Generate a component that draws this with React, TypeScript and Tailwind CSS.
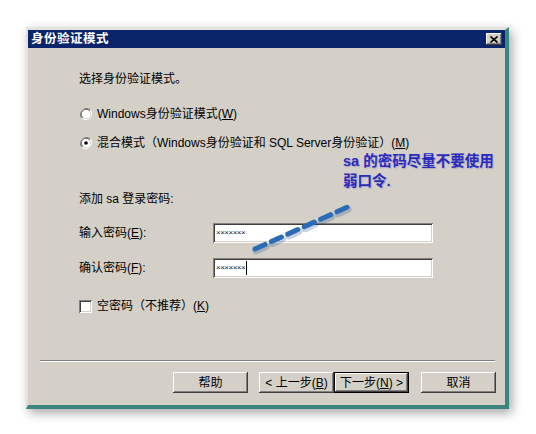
import React from "react";

const font = { fontFamily: '"Liberation Sans", "Noto Sans CJK SC", sans-serif' };

function U({ c }: { c: string }) {
  return <span className="underline underline-offset-1">{c}</span>;
}

function Radio({ checked }: { checked?: boolean }) {
  return (
    <svg width="12" height="12" viewBox="0 0 12 12" className="shrink-0">
      <path d="M10.2 1.8 A6 6 0 0 0 1.8 10.2" fill="none" stroke="#808080" strokeWidth="1" />
      <path d="M9.5 2.5 A5 5 0 0 0 2.5 9.5" fill="none" stroke="#404040" strokeWidth="1" />
      <path d="M1.8 10.2 A6 6 0 0 0 10.2 1.8" fill="none" stroke="#ffffff" strokeWidth="1" />
      <circle cx="6" cy="6" r="4.3" fill="#ffffff" />
      {checked && <circle cx="6" cy="6" r="1.8" fill="#000000" />}
    </svg>
  );
}

const btn =
  "w-[75px] h-[21px] flex items-center justify-center bg-[#d4d0c8] text-[12px] text-black shadow-[inset_-1px_-1px_#404040,inset_1px_1px_#ffffff,inset_-2px_-2px_#808080,inset_2px_2px_#d4d0c8]";

const field =
  "w-[220px] h-[20px] bg-white flex items-center pl-[3px] shadow-[inset_1px_1px_#808080,inset_-1px_-1px_#ffffff,inset_2px_2px_#404040,inset_-2px_-2px_#d4d0c8]";

export default function App() {
  return (
    <div className="w-[536px] h-[434px] bg-white pt-[27px] pl-[26px]" style={font}>
      <div className="relative w-[483px] h-[382px] bg-[#d4d0c8] border-l-2 border-t-[3px] border-r-4 border-b-4 border-l-[#e4e2dc] border-t-[#e4e2dc] border-r-[#3a8580] border-b-[#3a8580] shadow-[3px_4px_10px_rgba(0,0,0,0.35)]">
        {/* title bar */}
        <div className="h-[18px] bg-[#0a246a] flex items-center justify-between pl-[3px] pr-[3px]">
          <span className="text-white font-bold text-[12.5px] leading-none tracking-[0.5px]">身份验证模式</span>
          <div className="w-[16px] h-[12px] bg-[#d4d0c8] flex items-center justify-center shadow-[inset_-1px_-1px_#404040,inset_1px_1px_#ffffff,inset_-2px_-2px_#808080]">
            <svg width="8" height="7" viewBox="0 0 8 7">
              <path d="M0.5 0.5 L7.5 6.5 M7.5 0.5 L0.5 6.5" stroke="#000" strokeWidth="1.6" />
            </svg>
          </div>
        </div>

        {/* content */}
        <div className="flex flex-col text-[12px] text-black">
          <div className="pl-[51px] mt-[23px] h-[16px] leading-[16px]">选择身份验证模式。</div>

          <div className="pl-[52px] mt-[19px] h-[16px] flex items-center gap-[5px]">
            <Radio />
            <span className="leading-[16px]">
              Windows身份验证模式(<U c="W" />)
            </span>
          </div>

          <div className="pl-[52px] mt-[13px] h-[16px] flex items-center gap-[5px]">
            <Radio checked />
            <span className="leading-[16px]">
              混合模式（Windows身份验证和 SQL Server身份验证）(<U c="M" />)
            </span>
          </div>

          <div className="pl-[51px] mt-[40px] h-[16px] leading-[16px]">添加 sa 登录密码:</div>

          <div className="pl-[51px] mt-[16px] flex items-center">
            <span className="w-[134px] leading-[16px]">
              输入密码(<U c="E" />):
            </span>
            <div className={field}>
              <span className="text-[8px] leading-none tracking-[-0.5px] text-[#202020]">×××××××</span>
            </div>
          </div>

          <div className="pl-[51px] mt-[15px] flex items-center">
            <span className="w-[134px] leading-[16px]">
              确认密码(<U c="F" />):
            </span>
            <div className={field}>
              <span className="text-[8px] leading-none tracking-[-0.5px] text-[#202020]">×××××××</span>
              <span className="w-px h-[14px] bg-black ml-[1px]" />
            </div>
          </div>

          <div className="pl-[51px] mt-[20px] h-[16px] flex items-center gap-[5px]">
            <div className="w-[13px] h-[13px] bg-white shadow-[inset_1px_1px_#808080,inset_-1px_-1px_#ffffff,inset_2px_2px_#404040,inset_-2px_-2px_#d4d0c8]" />
            <span className="leading-[16px]">
              空密码（不推荐）(<U c="K" />)
            </span>
          </div>

          <div className="ml-[12px] mt-[46px] w-[455px] h-[2px] border-t border-t-[#808080] border-b border-b-white" />

          <div className="mt-[10px] flex items-center pl-[145px]">
            <div className={btn}>帮助</div>
            <div className="w-[11px]" />
            <div className={btn}>
              &lt; 上一步(<U c="B" />)
            </div>
            <div className="w-[75px] h-[21px] flex items-center justify-center bg-[#d4d0c8] text-[12px] border border-black shadow-[inset_-1px_-1px_#404040,inset_1px_1px_#ffffff,inset_-2px_-2px_#808080]">
              下一步(<U c="N" />) &gt;
            </div>
            <div className="w-[12px]" />
            <div className={btn}>取消</div>
          </div>
        </div>

        {/* annotation overlay */}
        <div className="absolute left-[315px] top-[121px] text-[14.5px] font-bold leading-[20px] text-[#2b2bbb] [text-shadow:1px_1px_1px_rgba(120,120,200,0.45)]">
          <div>sa 的密码尽量不要使用</div>
          <div>弱口令.</div>
        </div>
        <svg className="absolute left-[220px] top-[167px]" width="110" height="60" viewBox="0 0 110 60">
          <line x1="7" y1="52" x2="104" y2="8" stroke="#1f4f8a" strokeOpacity="0.25" strokeWidth="7" strokeDasharray="11 7" strokeLinecap="round" transform="translate(1 2)" />
          <line x1="7" y1="52" x2="104" y2="8" stroke="#2a6cb8" strokeWidth="5" strokeDasharray="11 7" strokeLinecap="round" />
        </svg>
      </div>
    </div>
  );
}
